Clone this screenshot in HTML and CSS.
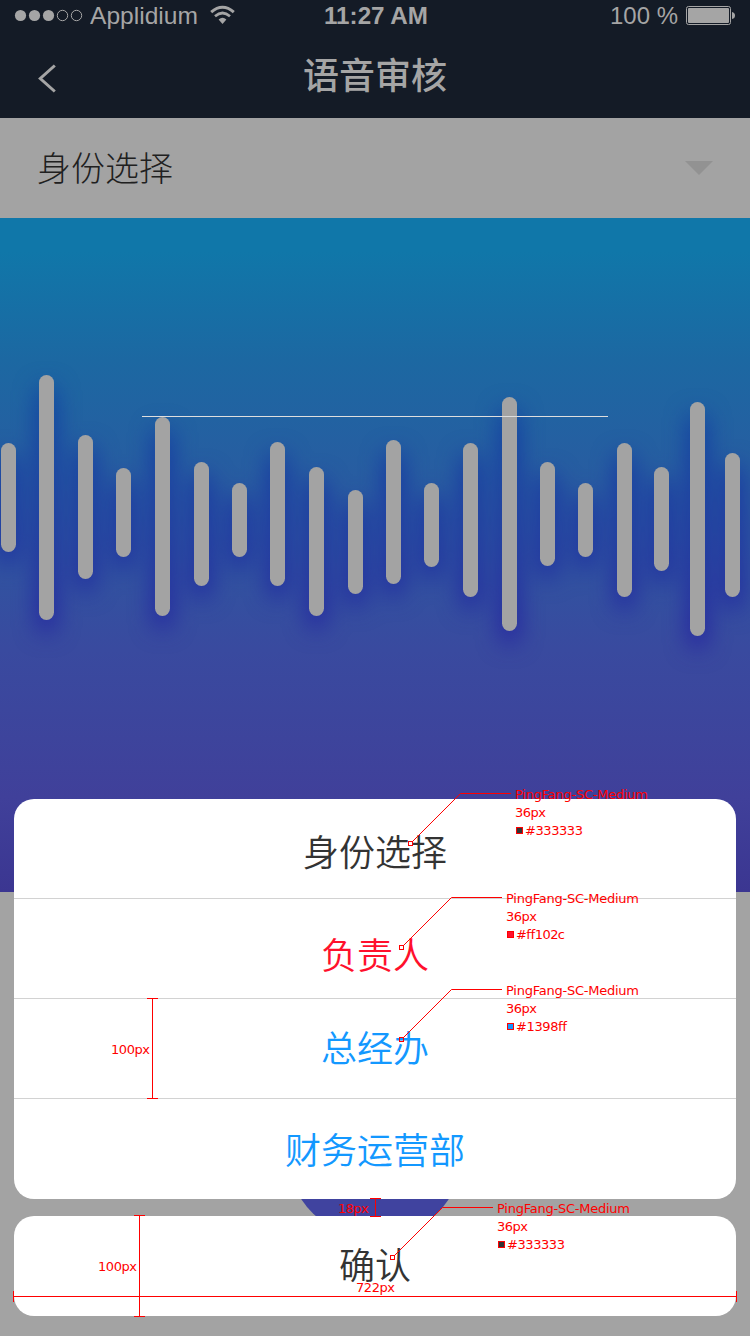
FILE: index.html
```html
<!DOCTYPE html>
<html lang="zh-CN">
<head>
<meta charset="utf-8">
<title>语音审核</title>
<link rel="stylesheet" href="styles.css">
</head>
<body>
<div class="screen">
  <header class="header">
    <div class="status">
      <div class="carrier">
        <svg width="70" height="32" viewBox="0 0 70 32">
          <g fill="#a5a5a5"><circle cx="6.5" cy="15.5" r="5.6"/><circle cx="20.5" cy="15.5" r="5.6"/><circle cx="34.5" cy="15.5" r="5.6"/></g>
          <g fill="none" stroke="#a5a5a5"><circle cx="48.5" cy="15.5" r="5.2"/><circle cx="62.5" cy="15.5" r="5.2"/></g>
        </svg>
        <svg class="carrier-name" width="110" height="32"><text x="0" y="24" textLength="108" lengthAdjust="spacingAndGlyphs">Applidium</text></svg>
        <svg width="26" height="32" viewBox="0 0 26 32" fill="none" stroke="#a5a5a5" stroke-width="3">
          <path d="M1.2 12.2Q12.500 2.400 23.800 12.200"/>
          <path d="M5 16.200Q12.500 9.800 20 16.200" stroke-width="2.700"/>
          <path d="M8.600 19.600Q12.500 16 16.400 19.600L12.500 24Z" fill="#a5a5a5" stroke="none"/>
        </svg>
      </div>
      <svg class="clock" width="106" height="32"><text x="0" y="24" textLength="104" lengthAdjust="spacingAndGlyphs">11:27 AM</text></svg>
      <div class="power">
        <svg width="70" height="32"><text x="1" y="24" textLength="68" lengthAdjust="spacingAndGlyphs">100 %</text></svg>
        <svg width="50" height="32" viewBox="0 0 50 32">
          <rect x=".5" y="6.5" width="44" height="18" rx="2" fill="none" stroke="#a5a5a5"/>
          <rect x="2" y="8" width="41" height="15" rx="1" fill="#a5a5a5"/>
          <path d="M46 12Q49 12.5 49 15.5T46 19Z" fill="#a5a5a5"/>
        </svg>
      </div>
    </div>
    <div class="nav">
      <svg class="back" width="20" height="30" viewBox="0 0 20 30"><path d="M17.800 2.500L3.300 15.500L17.800 28.500" fill="none" stroke="#a5a5a5" stroke-width="3"/></svg>
      <h1 class="title">语音审核</h1>
    </div>
  </header>
  <div class="picker">
    <span class="picker-label">身份选择</span>
    <svg width="28" height="14" viewBox="0 0 28 14"><path d="M0 0H28L14 14Z" fill="#929292"/></svg>
  </div>
  <main class="wave">
    <svg width="750" height="674" viewBox="0 218 750 674">
      <defs>
        <filter id="glow" filterUnits="userSpaceOnUse" x="-40" y="330" width="830" height="390" color-interpolation-filters="sRGB"><feGaussianBlur stdDeviation="12"/></filter>
        <g id="bars">
          <rect x="1" y="443" width="15" height="109" rx="7.5"/>
          <rect x="39" y="375" width="15" height="245" rx="7.5"/>
          <rect x="78" y="435" width="15" height="144" rx="7.5"/>
          <rect x="116" y="468" width="15" height="89" rx="7.5"/>
          <rect x="155" y="417" width="15" height="199" rx="7.5"/>
          <rect x="194" y="462" width="15" height="124" rx="7.5"/>
          <rect x="232" y="483" width="15" height="74" rx="7.5"/>
          <rect x="270" y="442" width="15" height="144" rx="7.5"/>
          <rect x="309" y="467" width="15" height="149" rx="7.5"/>
          <rect x="348" y="490" width="15" height="104" rx="7.5"/>
          <rect x="386" y="440" width="15" height="144" rx="7.5"/>
          <rect x="424" y="483" width="15" height="84" rx="7.5"/>
          <rect x="463" y="443" width="15" height="154" rx="7.5"/>
          <rect x="502" y="397" width="15" height="234" rx="7.5"/>
          <rect x="540" y="462" width="15" height="104" rx="7.5"/>
          <rect x="578" y="483" width="15" height="74" rx="7.5"/>
          <rect x="617" y="443" width="15" height="154" rx="7.5"/>
          <rect x="654" y="467" width="15" height="104" rx="7.5"/>
          <rect x="690" y="402" width="15" height="234" rx="7.5"/>
          <rect x="725" y="453" width="15" height="144" rx="7.5"/>
        </g>
        <linearGradient id="shade" gradientUnits="userSpaceOnUse" x1="0" y1="375" x2="0" y2="636">
          <stop offset="0" stop-color="#0a38a2"/><stop offset="1" stop-color="#2014a0"/>
        </linearGradient>
      </defs>
      <use href="#bars" y="12" fill="url(#shade)" filter="url(#glow)"/>
      <use href="#bars" fill="#a3a3a3"/>
      <path d="M142 416.5H608" stroke="#dedede"/>
    </svg>
  </main>
  <div class="record"></div>

  <section class="sheet">
    <div class="options">
      <div class="option heading">身份选择</div>
      <div class="option danger">负责人</div>
      <div class="option general">总经办</div>
      <div class="option finance">财务运营部</div>
    </div>
    <div class="confirm">确认</div>
  </section>

  <svg class="notes" width="750" height="1336" viewBox="0 0 750 1336">
    <g class="leader">
      <path d="M412.500 841.500L460.500 793.500H511"/>
      <path d="M403 946L451.500 897.500H502"/>
      <path d="M403 1038L451.500 989.500H502"/>
      <path d="M394 1256L442.500 1207.500H493"/>
    </g>
    <g class="rule">
      <path d="M408.500 841.500h4v4h-4zM399.500 945.500h4v4h-4zM399.500 1037.500h4v4h-4zM390.500 1255.500h4v4h-4z"/>
      <path d="M152.500 998V1099M147 998.500H158M147 1098.500H158"/>
      <path d="M139.500 1215V1317M134 1215.500H145M134 1316.500H145"/>
      <path d="M375.500 1198V1217M370 1198.500H381M370 1216.500H381"/>
      <path d="M13 1296.500H737M13.500 1291V1302M736.500 1291V1302"/>
      <path d="M516.500 827.500h6v6h-6z" fill="#333"/>
      <path d="M507.500 931.500h6v6h-6z" fill="#ff102c"/>
      <path d="M507.500 1023.500h6v6h-6z" fill="#1398ff"/>
      <path d="M498.500 1241.500h6v6h-6z" fill="#333"/>
    </g>
    <g class="labels">
      <text x="515" y="799" textLength="133">PingFang-SC-Medium</text><text x="515" y="817" textLength="31">36px</text><text x="525" y="835" textLength="58">#333333</text>
      <text x="506" y="903" textLength="133">PingFang-SC-Medium</text><text x="506" y="921" textLength="31">36px</text><text x="516" y="939" textLength="49">#ff102c</text>
      <text x="506" y="995" textLength="133">PingFang-SC-Medium</text><text x="506" y="1013" textLength="31">36px</text><text x="516" y="1031" textLength="51">#1398ff</text>
      <text x="497" y="1213" textLength="133">PingFang-SC-Medium</text><text x="497" y="1231" textLength="31">36px</text><text x="507" y="1249" textLength="58">#333333</text>
      <text x="111" y="1054" textLength="39">100px</text>
      <text x="98" y="1271" textLength="39">100px</text>
      <text x="338" y="1213" textLength="31">18px</text>
      <text x="356" y="1292" textLength="39">722px</text>
    </g>
  </svg>
</div>
</body>
</html>
```

FILE: styles.css
```css
* { box-sizing: border-box; }
body { margin: 0; font-family: "Noto Sans CJK SC", sans-serif; }
svg { display: block; flex: none; }
.screen { position: relative; width: 750px; height: 1336px; overflow: hidden; background: #a3a3a3; }
.header { height: 118px; background: #141b26; color: #a5a5a5; }
.status { display: flex; height: 32px; padding: 0 15px 0 14px; font-family: "Liberation Sans", Arial, sans-serif; font-size: 24px; }
.status text { fill: #a5a5a5; }
.carrier { display: flex; width: 310px; }
.carrier-name { margin: 0 10px 0 6px; }
.clock { font-weight: 700; }
.power { display: flex; gap: 7px; margin-left: auto; margin-right: -1px; }
.nav { display: grid; grid-template-columns: 1fr auto 1fr; align-items: center; height: 86px; padding-bottom: 4px; }
.back { margin: 9px 0 0 37px; }
.title { margin: 0; font-size: 36px; font-weight: 500; line-height: 52px; }
.picker { display: flex; align-items: center; justify-content: space-between; height: 100px; padding: 0 37px; font-size: 34px; font-weight: 300; color: #202020; }
.picker-label { padding-bottom: 4px; }
.wave { height: 674px; background: linear-gradient(#1077a9 0%, #1077a9 5%, #1c68a2 21%, #2a5aa1 42%, #394a9f 64%, #40409a 86%, #3b3691 100%); }
.record { width: 176px; height: 176px; margin: 171px auto 0; border-radius: 50%; background: #40439f; }
.sheet { position: absolute; top: 799px; left: 14px; width: 722px; display: flex; flex-direction: column; gap: 17px; text-align: center; font-size: 36px; font-weight: 350; line-height: 52px; color: #333; }
.options, .confirm { overflow: hidden; border-radius: 20px; background: #fff; }
.option { height: 100px; padding-top: 25px; border-bottom: 1px solid #d2d2d2; }
.option:last-child { border-bottom: 0; }
.danger { color: #ff102c; padding-top: 28px; }
.general { color: #1398ff; padding-top: 21px; }
.finance { color: #1398ff; padding-top: 23px; }
.confirm { height: 100px; padding-top: 21px; }
.notes { position: absolute; inset: 0; }
.leader { fill: none; stroke: #f00; stroke-width: 1; }
.rule { fill: none; stroke: #f00; stroke-width: 1; shape-rendering: crispEdges; }
.labels { fill: #f00; font: 13px "DejaVu Sans", sans-serif; }
```
